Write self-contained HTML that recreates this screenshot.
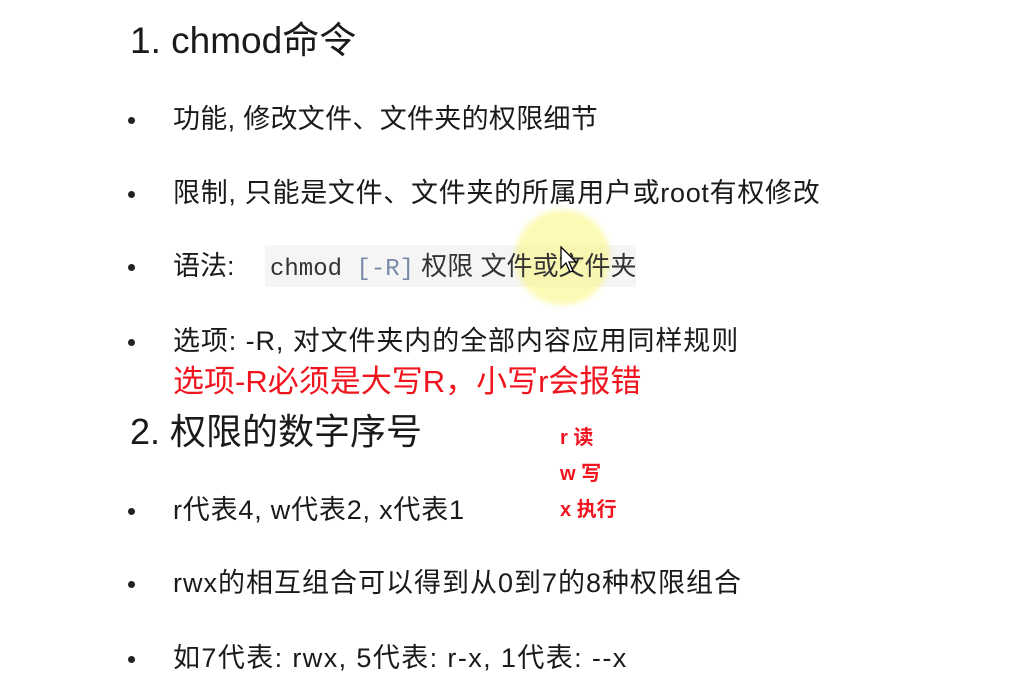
<!DOCTYPE html>
<html><head><meta charset="utf-8"><style>
body{margin:0;width:1029px;height:679px;background:#fff;position:relative;overflow:hidden;font-family:"Liberation Sans","Noto Sans CJK SC",sans-serif;color:#1a1a1a}
.a{position:absolute;white-space:nowrap;line-height:1}
.h{font-size:37px;left:130px}
.b{font-size:27px;left:173px}
.d{position:absolute;left:128px;width:7px;height:7px;border-radius:50%;background:#222}
.r{color:#f0141e;font-weight:bold;font-size:20px;left:560px}
</style></head><body>
<div class="a h" style="top:22px">1. chmod命令</div>
<div class="d" style="top:117px"></div><div class="a b" style="top:106px;letter-spacing:0.3px">功能, 修改文件、文件夹的权限细节</div>
<div class="d" style="top:191px"></div><div class="a b" style="top:180px;letter-spacing:0.7px">限制, 只能是文件、文件夹的所属用户或root有权修改</div>
<div class="d" style="top:264px"></div><div class="a b" style="top:253px">语法:</div>
<div style="position:absolute;left:265px;top:245px;width:371px;height:42px;background:#f5f5f5"></div>
<div style="position:absolute;left:515px;top:210px;width:95px;height:95px;border-radius:50%;background:rgba(250,245,120,0.55);filter:blur(3px)"></div>
<div class="a" style="left:270px;top:253px;font-size:26px;color:#333"><span style="font-family:'Liberation Mono',monospace;font-size:24px">chmod <span style="color:#7a8aa8">[-R]</span></span> 权限 文件或文件夹</div>
<svg style="position:absolute;left:560px;top:246px" width="20" height="28" viewBox="0 0 20 28"><path d="M1 1 L1 22 L6 17 L10 26 L13 25 L9 16 L16 16 Z" fill="#fff" stroke="#000" stroke-width="1.3"/></svg>
<div class="d" style="top:339px"></div><div class="a b" style="top:328px;letter-spacing:0.9px">选项: -R, 对文件夹内的全部内容应用同样规则</div>
<div class="a" style="left:173px;top:366px;font-size:31px;color:#f0141e">选项-R必须是大写R，小写r会报错</div>
<div class="a h" style="top:414px;font-size:36px">2. 权限的数字序号</div>
<div class="a r" style="top:428px">r 读</div>
<div class="a r" style="top:464px">w 写</div>
<div class="a r" style="top:500px">x 执行</div>
<div class="d" style="top:508px"></div><div class="a b" style="top:497px;letter-spacing:0.8px">r代表4, w代表2, x代表1</div>
<div class="d" style="top:581px"></div><div class="a b" style="top:570px;letter-spacing:1px">rwx的相互组合可以得到从0到7的8种权限组合</div>
<div class="d" style="top:656px"></div><div class="a b" style="top:645px;letter-spacing:1.4px">如7代表: rwx, 5代表: r-x, 1代表: --x</div>
</body></html>
